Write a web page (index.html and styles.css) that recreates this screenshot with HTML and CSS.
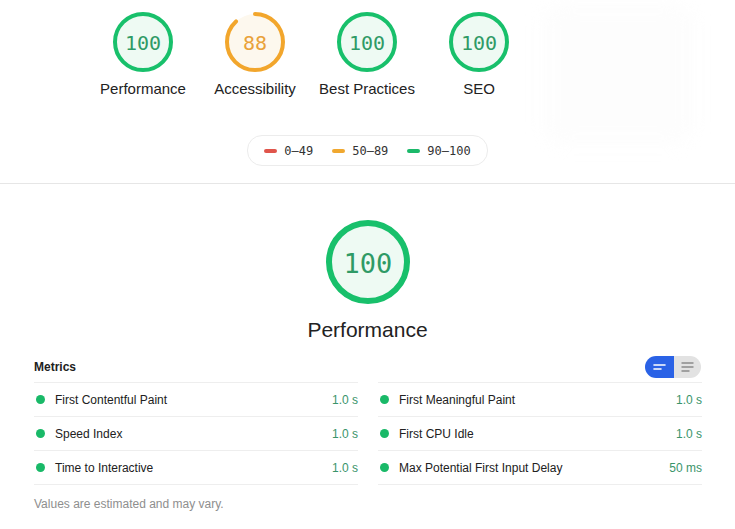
FILE: index.html
```html
<!DOCTYPE html>
<html>
<head>
<meta charset="utf-8">
<link rel="stylesheet" href="styles.css">
</head>
<body>
<header class="top">
  <div class="gauges">
    <div class="gauge">
      <svg class="ring" width="62" height="62" viewBox="0 0 62 62">
        <circle class="fill-pass" cx="31" cy="31" r="28"/>
        <text class="num num-pass" x="31" y="32">100</text>
      </svg>
      <div class="glabel">Performance</div>
    </div>
    <div class="gauge">
      <svg class="ring" width="62" height="62" viewBox="0 0 62 62">
        <circle class="bg-avg" cx="31" cy="31" r="28"/>
        <circle class="arc-avg" cx="31" cy="31" r="28" stroke-dasharray="154.8 176" transform="rotate(-90 31 31)"/>
        <text class="num num-avg" x="31" y="32">88</text>
      </svg>
      <div class="glabel">Accessibility</div>
    </div>
    <div class="gauge">
      <svg class="ring" width="62" height="62" viewBox="0 0 62 62">
        <circle class="fill-pass" cx="31" cy="31" r="28"/>
        <text class="num num-pass" x="31" y="32">100</text>
      </svg>
      <div class="glabel">Best Practices</div>
    </div>
    <div class="gauge">
      <svg class="ring" width="62" height="62" viewBox="0 0 62 62">
        <circle class="fill-pass" cx="31" cy="31" r="28"/>
        <text class="num num-pass" x="31" y="32">100</text>
      </svg>
      <div class="glabel">SEO</div>
    </div>
    <div class="thumb"></div>
  </div>
  <div class="legend-wrap">
    <div class="legend">
      <span class="item"><i class="dash red"></i>0–49</span>
      <span class="item"><i class="dash orange"></i>50–89</span>
      <span class="item"><i class="dash green"></i>90–100</span>
    </div>
  </div>
</header>

<main class="perf">
  <div class="big">
    <svg width="88" height="88" viewBox="0 0 88 88">
      <circle class="fill-pass big-ring" cx="44" cy="44" r="39"/>
      <text class="num big-num num-pass" x="44" y="45">100</text>
    </svg>
    <div class="big-label">Performance</div>
  </div>

  <section class="metrics">
    <div class="mhead">
      <div class="mtitle">Metrics</div>
      <div class="toggle">
        <span class="tg on">
          <svg width="14" height="10" viewBox="0 0 14 10"><path d="M1 3h11M1 7h7" stroke="#fff" stroke-width="1.6" stroke-linecap="round"/></svg>
        </span>
        <span class="tg off">
          <svg width="14" height="12" viewBox="0 0 14 12"><path d="M1 2h11M1 6h11M1 10h7" stroke="#8a8a8a" stroke-width="1.4" stroke-linecap="round"/></svg>
        </span>
      </div>
    </div>
    <div class="cols">
      <div class="col">
        <div class="row"><i class="dot"></i><span class="name">First Contentful Paint</span><span class="val">1.0 s</span></div>
        <div class="row"><i class="dot"></i><span class="name">Speed Index</span><span class="val">1.0 s</span></div>
        <div class="row"><i class="dot"></i><span class="name">Time to Interactive</span><span class="val">1.0 s</span></div>
      </div>
      <div class="col">
        <div class="row"><i class="dot"></i><span class="name">First Meaningful Paint</span><span class="val">1.0 s</span></div>
        <div class="row"><i class="dot"></i><span class="name">First CPU Idle</span><span class="val">1.0 s</span></div>
        <div class="row"><i class="dot"></i><span class="name">Max Potential First Input Delay</span><span class="val">50 ms</span></div>
      </div>
    </div>
    <p class="note">Values are estimated and may vary.</p>
  </section>
</main>
</body>
</html>
```

FILE: styles.css
```css
html, body {
  margin: 0;
  padding: 0;
  background: #fff;
  font-family: "Liberation Sans", Arial, sans-serif;
  color: #212121;
}

.top {
  border-bottom: 1px solid #e6e6e6;
  padding-bottom: 17px;
}

.gauges {
  display: flex;
  padding-left: 87px;
}

.gauge {
  width: 112px;
  display: flex;
  flex-direction: column;
  align-items: center;
  padding-top: 11px;
}

.ring { display: block; }

.fill-pass {
  fill: #eefaf3;
  stroke: #18c06b;
  stroke-width: 4;
}

.bg-avg {
  fill: #fdf8ee;
  stroke: none;
}

.arc-avg {
  fill: none;
  stroke: #f2a62c;
  stroke-width: 4;
  stroke-linecap: round;
}

.num {
  font-family: "DejaVu Sans Mono", "Liberation Mono", monospace;
  font-size: 20px;
  text-anchor: middle;
  dominant-baseline: central;
}

.num-pass { fill: #2f9a66; }
.num-avg { fill: #e9a23a; }

.glabel {
  margin-top: 7px;
  font-size: 15px;
  line-height: 18px;
  color: #222;
  white-space: nowrap;
}

.thumb {
  width: 150px;
  height: 140px;
  margin-left: 8px;
  margin-top: 4px;
  background: #fdfdfd;
  border-radius: 20px;
  filter: blur(8px);
}

.legend-wrap {
  display: flex;
  justify-content: center;
  margin-top: -9px;
}

.legend {
  display: flex;
  align-items: center;
  gap: 19px;
  height: 29px;
  padding: 0 16px 0 16px;
  border: 1px solid #ececec;
  border-radius: 15px;
  font-family: "DejaVu Sans Mono", "Liberation Mono", monospace;
  font-size: 12px;
  color: #333;
}

.item {
  display: flex;
  align-items: center;
  gap: 7px;
}

.dash {
  display: block;
  width: 13px;
  height: 4px;
  border-radius: 2px;
}
.dash.red { background: #e0554b; }
.dash.orange { background: #f0a830; }
.dash.green { background: #1bb96a; }

.perf {
  padding-top: 34px;
}

.big {
  display: flex;
  flex-direction: column;
  align-items: center;
}

.big svg { display: block; }

.big-ring { stroke-width: 6; }

.big-num { font-size: 27px; }

.big-label {
  margin-top: 12px;
  font-size: 21px;
  line-height: 24px;
  color: #222;
}

.metrics {
  padding: 14px 33px 0 34px;
}

.mhead {
  display: flex;
  justify-content: space-between;
  align-items: center;
  height: 22px;
  padding-bottom: 4px;
}

.mtitle {
  font-size: 12px;
  font-weight: bold;
  color: #212121;
}

.toggle {
  display: flex;
  width: 56px;
  height: 22px;
  border-radius: 11px;
  overflow: hidden;
  margin-right: 1px;
}

.tg {
  display: flex;
  align-items: center;
  justify-content: center;
}

.tg.on {
  width: 29px;
  background: #2a62e6;
}

.tg.off {
  flex: 1;
  background: #e2e2e2;
}

.tg svg { display: block; }

.cols {
  display: flex;
  gap: 20px;
}

.col {
  flex: 1;
  border-bottom: 1px solid #eeeeee;
}

.row {
  display: flex;
  align-items: center;
  height: 33px;
  border-top: 1px solid #eeeeee;
  font-size: 12px;
}

.dot {
  display: block;
  width: 9px;
  height: 9px;
  border-radius: 50%;
  background: #19b968;
  margin: 0 10px 0 2px;
}

.name {
  flex: 1;
  color: #212121;
}

.val {
  color: #3a946a;
}

.note {
  margin: 12px 0 0;
  font-size: 12px;
  color: #8e8e8e;
}
```
